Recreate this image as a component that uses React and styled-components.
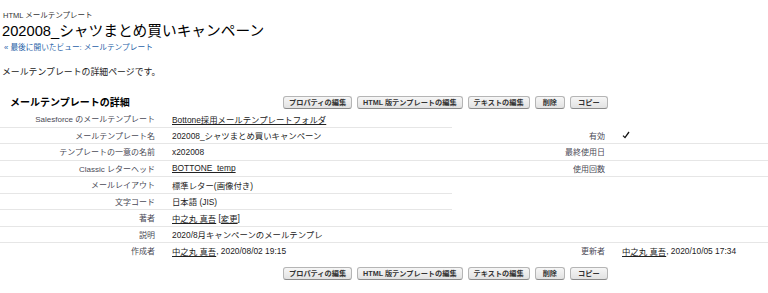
import React from "react"
import styled, { createGlobalStyle } from "styled-components"

const GlobalStyle = createGlobalStyle`
  body {
    margin: 0;
    background: #fff;
    font-family: "Liberation Sans", Arial, "Noto Sans CJK JP", sans-serif;
    color: #222;
  }
`

const Page = styled.div`
  width: 768px;
  height: 293px;
  overflow: hidden;
`

const Header = styled.div`
  padding: 11px 0 0 2px;
`

const TypeLine = styled.div`
  font-size: 7.5px;
  line-height: 10px;
  color: #333;
  padding-left: 1px;
`

const Title = styled.h1`
  margin: 0;
  font-size: 14.7px;
  line-height: 20px;
  font-weight: normal;
  color: #000;
`

const BackLink = styled.a`
  display: block;
  margin: 2px 0 0 2px;
  font-size: 7.7px;
  line-height: 10px;
  color: #1f5fa8;
  text-decoration: none;
`

const Intro = styled.div`
  margin-top: 13px;
  font-size: 8.9px;
  line-height: 12px;
  color: #222;
`

const Block = styled.div`
  margin-top: 18px;
`

const BlockHeader = styled.div`
  display: flex;
  align-items: center;
  padding-left: ${(p) => (p.$bottom ? "0" : "10px")};
  margin-top: ${(p) => (p.$bottom ? "7px" : "0")};
`

const BlockTitle = styled.h2`
  margin: 0;
  width: 273px;
  font-size: 10px;
  line-height: 13px;
  font-weight: bold;
  color: #000;
`

const Spacer = styled.div`
  width: 283px;
`

const ButtonBar = styled.div`
  display: flex;
  gap: 5px;
`

const Button = styled.button`
  font-family: "Liberation Sans", Arial, "Noto Sans CJK JP", sans-serif;
  font-size: 7.2px;
  font-weight: bold;
  line-height: 11px;
  height: 13px;
  padding: 0 5px;
  color: #333;
  white-space: pre;
  background: linear-gradient(#f6f6f6, #e2e2e2);
  border: 1px solid #b5b5b5;
  border-bottom-color: #8a8a8a;
  border-radius: 3px;
`

const Table = styled.div`
  margin-top: 2px;
`

const Row = styled.div`
  display: grid;
  grid-template-columns: 162px 290px 160px 1fr;
  height: 16.5px;
`

const Cell = styled.div`
  display: flex;
  align-items: center;
  justify-content: ${(p) => (p.$label ? "flex-end" : "flex-start")};
  padding: ${(p) => (p.$label ? "0 7px 0 0" : "0 0 0 10px")};
  font-size: ${(p) => (p.$label ? "8px" : "8.4px")};
  color: ${(p) => (p.$label ? "#4a4a56" : "#222")};
  white-space: nowrap;
  border-bottom: 1px solid ${(p) => (p.$line ? "#e6e6e6" : "transparent")};
`

const Link = styled.a`
  color: #222;
  text-decoration: underline;
`

const Check = () => (
  <svg width="8" height="8" viewBox="0 0 8 8">
    <path d="M1 4.6 L3 6.6 L7 1" fill="none" stroke="#111" strokeWidth="1.3" />
  </svg>
)

const buttons = ["プロパティの編集", "HTML 版テンプレートの編集", "テキストの編集", " 削除 ", " コピー "]

const Buttons = () => (
  <ButtonBar>
    {buttons.map((b) => (
      <Button key={b}>{b}</Button>
    ))}
  </ButtonBar>
)

const rows = [
  {
    label: "Salesforce のメールテンプレート",
    value: <Link>Bottone採用メールテンプレートフォルダ</Link>,
    right: false,
  },
  { label: "メールテンプレート名", value: "202008_シャツまとめ買いキャンペーン", label2: "有効", value2: <Check />, right: true },
  { label: "テンプレートの一意の名前", value: "x202008", label2: "最終使用日", right: true },
  { label: "Classic レターヘッド", value: <Link>BOTTONE_temp</Link>, label2: "使用回数", right: true },
  { label: "メールレイアウト", value: "標準レター(画像付き)", right: false },
  { label: "文字コード", value: "日本語 (JIS)", right: false },
  {
    label: "著者",
    value: (
      <>
        <Link>中之丸 真吾</Link>&nbsp;[<Link>変更</Link>]
      </>
    ),
    right: true,
  },
  { label: "説明", value: "2020/8月キャンペーンのメールテンプレ", right: true },
  {
    label: "作成者",
    value: (
      <>
        <Link>中之丸 真吾</Link>, 2020/08/02 19:15
      </>
    ),
    label2: "更新者",
    value2: (
      <>
        <Link>中之丸 真吾</Link>, 2020/10/05 17:34
      </>
    ),
    right: false,
    last: true,
  },
]

export default function App() {
  return (
    <Page>
      <GlobalStyle />
      <Header>
        <TypeLine>HTML メールテンプレート</TypeLine>
        <Title>202008_シャツまとめ買いキャンペーン</Title>
        <BackLink>« 最後に開いたビュー: メールテンプレート</BackLink>
        <Intro>メールテンプレートの詳細ページです。</Intro>
      </Header>
      <Block>
        <BlockHeader>
          <BlockTitle>メールテンプレートの詳細</BlockTitle>
          <Buttons />
        </BlockHeader>
        <Table>
          {rows.map((r) => (
            <Row key={r.label}>
              <Cell $label $line={!r.last}>{r.label}</Cell>
              <Cell $line={!r.last}>{r.value}</Cell>
              <Cell $label $line={r.right}>{r.label2}</Cell>
              <Cell $line={r.right}>{r.value2}</Cell>
            </Row>
          ))}
        </Table>
        <BlockHeader $bottom>
          <Spacer />
          <Buttons />
        </BlockHeader>
      </Block>
    </Page>
  )
}
